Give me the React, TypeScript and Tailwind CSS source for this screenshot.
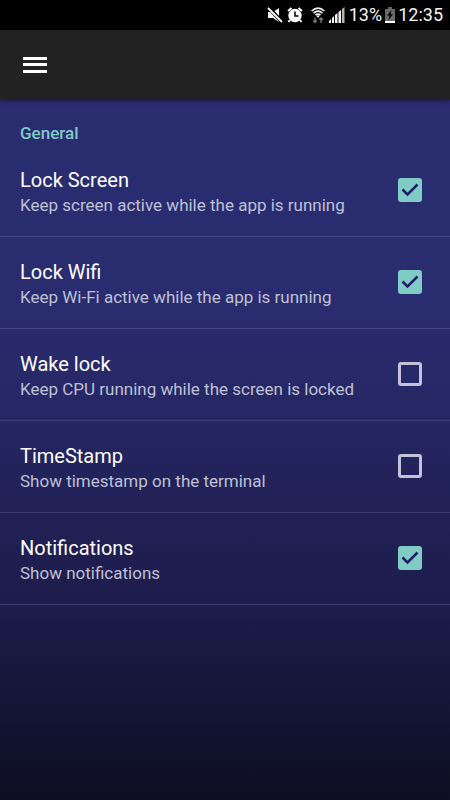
import { useState } from "react";

type Setting = { id: string; title: string; summary: string; enabled: boolean };

const initialSettings: Setting[] = [
  { id: "lock-screen", title: "Lock Screen", summary: "Keep screen active while the app is running", enabled: true },
  { id: "lock-wifi", title: "Lock Wifi", summary: "Keep Wi-Fi active while the app is running", enabled: true },
  { id: "wake-lock", title: "Wake lock", summary: "Keep CPU running while the screen is locked", enabled: false },
  { id: "timestamp", title: "TimeStamp", summary: "Show timestamp on the terminal", enabled: false },
  { id: "notifications", title: "Notifications", summary: "Show notifications", enabled: true },
];

function MutedIcon() {
  return (
    <svg width="16" height="16" viewBox="0 0 16 16" fill="none" aria-hidden="true">
      <path d="M1 5h5l6-4v14l-6-4H1z" fill="#f4f4f4" />
      <path d="M1 0l14 15" stroke="#000" strokeWidth="4" />
      <path d="M1 1l14 14" stroke="#f4f4f4" strokeWidth="2" />
    </svg>
  );
}

function AlarmIcon() {
  return (
    <svg width="16" height="16" viewBox="0 0 16 16" fill="none" aria-hidden="true">
      <circle cx="8" cy="8.500" r="6.700" fill="#fff" />
      <path d="M1 4l3.500-3M15 4l-3.500-3M3 13l-1.500 2M13 13l1.500 2" stroke="#fff" strokeWidth="2" />
      <path d="M8 4.500V9h3.500" stroke="#000" strokeWidth="1.500" />
    </svg>
  );
}

function WifiIcon() {
  return (
    <svg width="14" height="16" viewBox="0 0 14 16" fill="none" aria-hidden="true">
      <path d="M.6 4Q7-1.800 13.400 4M2.600 6.200Q7 2 11.400 6.200M4.500 8.200Q7 6 9.500 8.200" stroke="#f4f4f4" strokeWidth="1.600" />
      <path d="M5.300 9L7 10.800 8.700 9 7 8.200z" fill="#f4f4f4" />
      <path d="M4 10.500v5M2.200 13.500L4 15.300l1.800-1.800M10 16v-5M8.200 12.700L10 10.900l1.800 1.800" stroke="#777" strokeWidth="1.400" />
    </svg>
  );
}

function SignalIcon() {
  return (
    <svg width="16" height="16" viewBox="0 0 16 16" aria-hidden="true">
      <path d="M0 16v-2l2-2v4zM3 16v-5l2-2v7zM6 16V8l2.500-2v10zM9.500 16V5L12 3v13z" fill="#f4f4f4" />
      <path d="M13 16V2l2.500-2v16z" fill="#b5b3ab" />
    </svg>
  );
}

function BatteryIcon() {
  return (
    <svg width="10" height="16" viewBox="0 0 10 16" aria-hidden="true">
      <path d="M3 0h4v2h3v12H0V2h3z" fill="#696969" />
      <path d="M0 14h10v2H0z" fill="#fff" />
      <path d="M6.500 3L2 8.500h2.500L3.500 13 8 7.300H5.500z" fill="#000" />
    </svg>
  );
}

function StatusBar() {
  return (
    <div className="flex h-[30px] items-center justify-end bg-black pr-[7px] text-[18px] leading-[30px] text-[#f4f4f4]">
      <div className="flex items-center gap-1 pr-1">
        <MutedIcon />
        <AlarmIcon />
        <span className="pl-1"><WifiIcon /></span>
        <SignalIcon />
      </div>
      <span>13%</span>
      <span className="px-[3px]"><BatteryIcon /></span>
      <time>12:35</time>
    </div>
  );
}

function SettingRow({ setting, onToggle }: { setting: Setting; onToggle: () => void }) {
  return (
    <li className="border-b border-[#9999cc]/25">
      <label htmlFor={setting.id} className="flex h-[91px] cursor-pointer items-center justify-between pr-7 pb-0.5 pl-5">
        <span className="flex flex-col pt-1">
          <span className="text-[20px] leading-[26px] text-white">{setting.title}</span>
          <span className="text-[17px] leading-6 text-[#bfc0d4]">{setting.summary}</span>
        </span>
        <span className="grid shrink-0 place-items-center">
          <input
            id={setting.id}
            type="checkbox"
            checked={setting.enabled}
            onChange={onToggle}
            className="peer col-start-1 row-start-1 size-6 appearance-none rounded-[3px] border-[3px] border-[#c2c2d8] checked:border-[#80cbc4] checked:bg-[#80cbc4]"
          />
          <svg className="pointer-events-none col-start-1 row-start-1 hidden peer-checked:block" width="18" height="14" viewBox="0 0 18 14" fill="none" aria-hidden="true">
            <path d="M1.500 6.500l5 5L16.500 1.500" stroke="#211e67" strokeWidth="2.500" />
          </svg>
        </span>
      </label>
    </li>
  );
}

export default function App() {
  const [settings, setSettings] = useState(initialSettings);
  const toggle = (id: string) =>
    setSettings((list) => list.map((s) => (s.id === id ? { ...s, enabled: !s.enabled } : s)));

  return (
    <div className="flex min-h-screen flex-col bg-[#0d0e22] font-[Roboto,sans-serif]">
      <StatusBar />
      <header className="z-10 flex h-[70px] items-center bg-[#222222] px-[23px] shadow-[0_1px_4px_rgba(0,0,0,0.4)]">
        <button type="button" aria-label="Open menu" className="cursor-pointer">
          <svg width="24" height="18" viewBox="0 0 24 18" fill="#fff" aria-hidden="true">
            <path d="M0 1h24v3H0zM0 7h24v3H0zM0 14h24v3H0z" />
          </svg>
        </button>
      </header>
      <main className="flex-1 bg-linear-to-b from-[#2a2c70] from-30% via-[#1d1c4c] via-72% to-[#0d0e22]">
        <h2 className="pt-[21px] pl-5 text-[17px] leading-6 font-medium text-[#80cbc4]">General</h2>
        <ul>
          {settings.map((s) => (
            <SettingRow key={s.id} setting={s} onToggle={() => toggle(s.id)} />
          ))}
        </ul>
      </main>
    </div>
  );
}
